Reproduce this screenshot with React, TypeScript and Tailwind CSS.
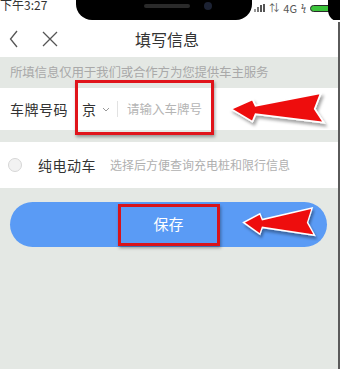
import React from 'react';

const font = { fontFamily: '"Noto Sans CJK SC", "Noto Sans", sans-serif' };

const RedArrow = ({ className }: { className: string }) => (
  <svg viewBox="0 0 100 36" className={className} preserveAspectRatio="none">
    <defs>
      <filter id="sh" x="-10%" y="-20%" width="130%" height="160%">
        <feDropShadow dx="2" dy="3" stdDeviation="1.5" floodColor="#000" floodOpacity="0.35" />
      </filter>
    </defs>
    <polygon
      points="2,17 23,8 26,14 90,2 84,17 93,30 26,22 23,29"
      fill="#ee0f0f"
      stroke="#fff"
      strokeWidth="1.6"
      strokeLinejoin="miter"
      filter="url(#sh)"
    />
  </svg>
);

export default function App() {
  return (
    <div className="relative w-[340px] h-[369px] overflow-hidden bg-[#e4e8e4]" style={font}>
      {/* status bar */}
      <div className="relative h-[20px] bg-white flex items-start justify-between">
        <span className="-mt-[4px] text-[12px] text-[#333] leading-[18px]">下午3:27</span>
        <div className="flex items-center gap-[4px] pr-[10px] pt-[2px] text-[11px] text-[#555] leading-[12px]">
          <div className="flex items-end gap-[1px] h-[8px]">
            <div className="w-[2px] h-[3px] bg-[#999]" />
            <div className="w-[2px] h-[5px] bg-[#777]" />
            <div className="w-[2px] h-[7px] bg-[#555]" />
            <div className="w-[2px] h-[8px] bg-[#555]" />
          </div>
          <span className="text-[10px]">⇅</span>
          <span>4G</span>
          <span className="text-[9px] text-[#444]">ϟ</span>
          <div className="w-[20px] h-[7px] rounded-l-[4px] bg-[#3bc43b] border border-[#2a2a2a]" />
        </div>
        {/* notch */}
        <div className="absolute left-[76px] top-0 w-[176px] h-[20px] bg-black rounded-b-[16px]">
          <div className="absolute left-[68px] top-[4px] w-[46px] h-[4px] rounded-full bg-[#2a2a2a]" />
          <div className="absolute left-[128px] top-[2px] w-[8px] h-[8px] rounded-full bg-[#1c2233]" />
        </div>
        <div className="absolute right-0 top-0 w-[12px] h-[22px] bg-black rounded-bl-[14px]" />
      </div>

      {/* nav bar */}
      <div className="relative h-[37px] bg-white flex items-center">
        <svg width="10" height="18" viewBox="0 0 10 18" className="ml-[9px]">
          <path d="M8 1 L1.5 9 L8 17" fill="none" stroke="#555" strokeWidth="1.3" />
        </svg>
        <svg width="16" height="16" viewBox="0 0 16 16" className="ml-[23px]">
          <path d="M1 1 L15 15 M15 1 L1 15" fill="none" stroke="#555" strokeWidth="1.3" />
        </svg>
        <span className="absolute left-0 right-[6px] text-center text-[16px] text-[#333] pointer-events-none">填写信息</span>
      </div>

      {/* hint strip */}
      <div className="h-[31px] flex items-center px-[10px] text-[12.5px] text-[#a9a9a9] tracking-[-0.2px]">
        所填信息仅用于我们或合作方为您提供车主服务
      </div>

      {/* plate row */}
      <div className="h-[42px] bg-white mr-[2px] flex items-center pl-[10px]">
        <span className="text-[14px] text-[#333] tracking-[0.5px]">车牌号码</span>
        <span className="ml-[14px] text-[14px] text-[#333]">京</span>
        <svg width="8" height="6" viewBox="0 0 8 6" className="ml-[6px] mt-[2px]">
          <path d="M1 1 L4 4 L7 1" fill="none" stroke="#999" strokeWidth="1" />
        </svg>
        <div className="ml-[7px] w-px h-[16px] bg-[#e2e2e2]" />
        <span className="ml-[9px] text-[12.5px] text-[#b5b5b5]">请输入车牌号</span>
      </div>

      {/* EV row */}
      <div className="mt-[12px] h-[46px] bg-white mr-[2px] flex items-center pl-[8px]">
        <div className="w-[14px] h-[14px] rounded-full border border-[#d6d6d6] bg-[#f2f2f2]" />
        <span className="ml-[16px] text-[14px] text-[#333] tracking-[0.5px]">纯电动车</span>
        <span className="ml-[14px] text-[12px] text-[#b0b0b0]">选择后方便查询充电桩和限行信息</span>
      </div>

      {/* save button */}
      <div className="mt-[14px] ml-[10px] w-[317px] h-[45px] rounded-full bg-[#5a9bf5] flex items-center justify-center">
        <span className="text-[15px] text-white">保存</span>
      </div>

      {/* right frame edge */}
      <div className="absolute right-0 top-[22px] bottom-0 w-[2px] bg-[#5a5a5a]" />

      {/* annotation boxes */}
      <div className="absolute left-[75px] top-[80px] w-[139px] h-[55px] border-[3px] border-[#e0141b] shadow-[1px_2px_3px_rgba(0,0,0,0.35)]" />
      <div className="absolute left-[118px] top-[204px] w-[102px] h-[42px] border-[3px] border-[#d8131a] shadow-[1px_2px_3px_rgba(0,0,0,0.35)]" />
      <RedArrow className="absolute left-[229px] top-[91px] w-[102px] h-[38px]" />
      <RedArrow className="absolute left-[242px] top-[206px] w-[78px] h-[35px]" />
    </div>
  );
}
